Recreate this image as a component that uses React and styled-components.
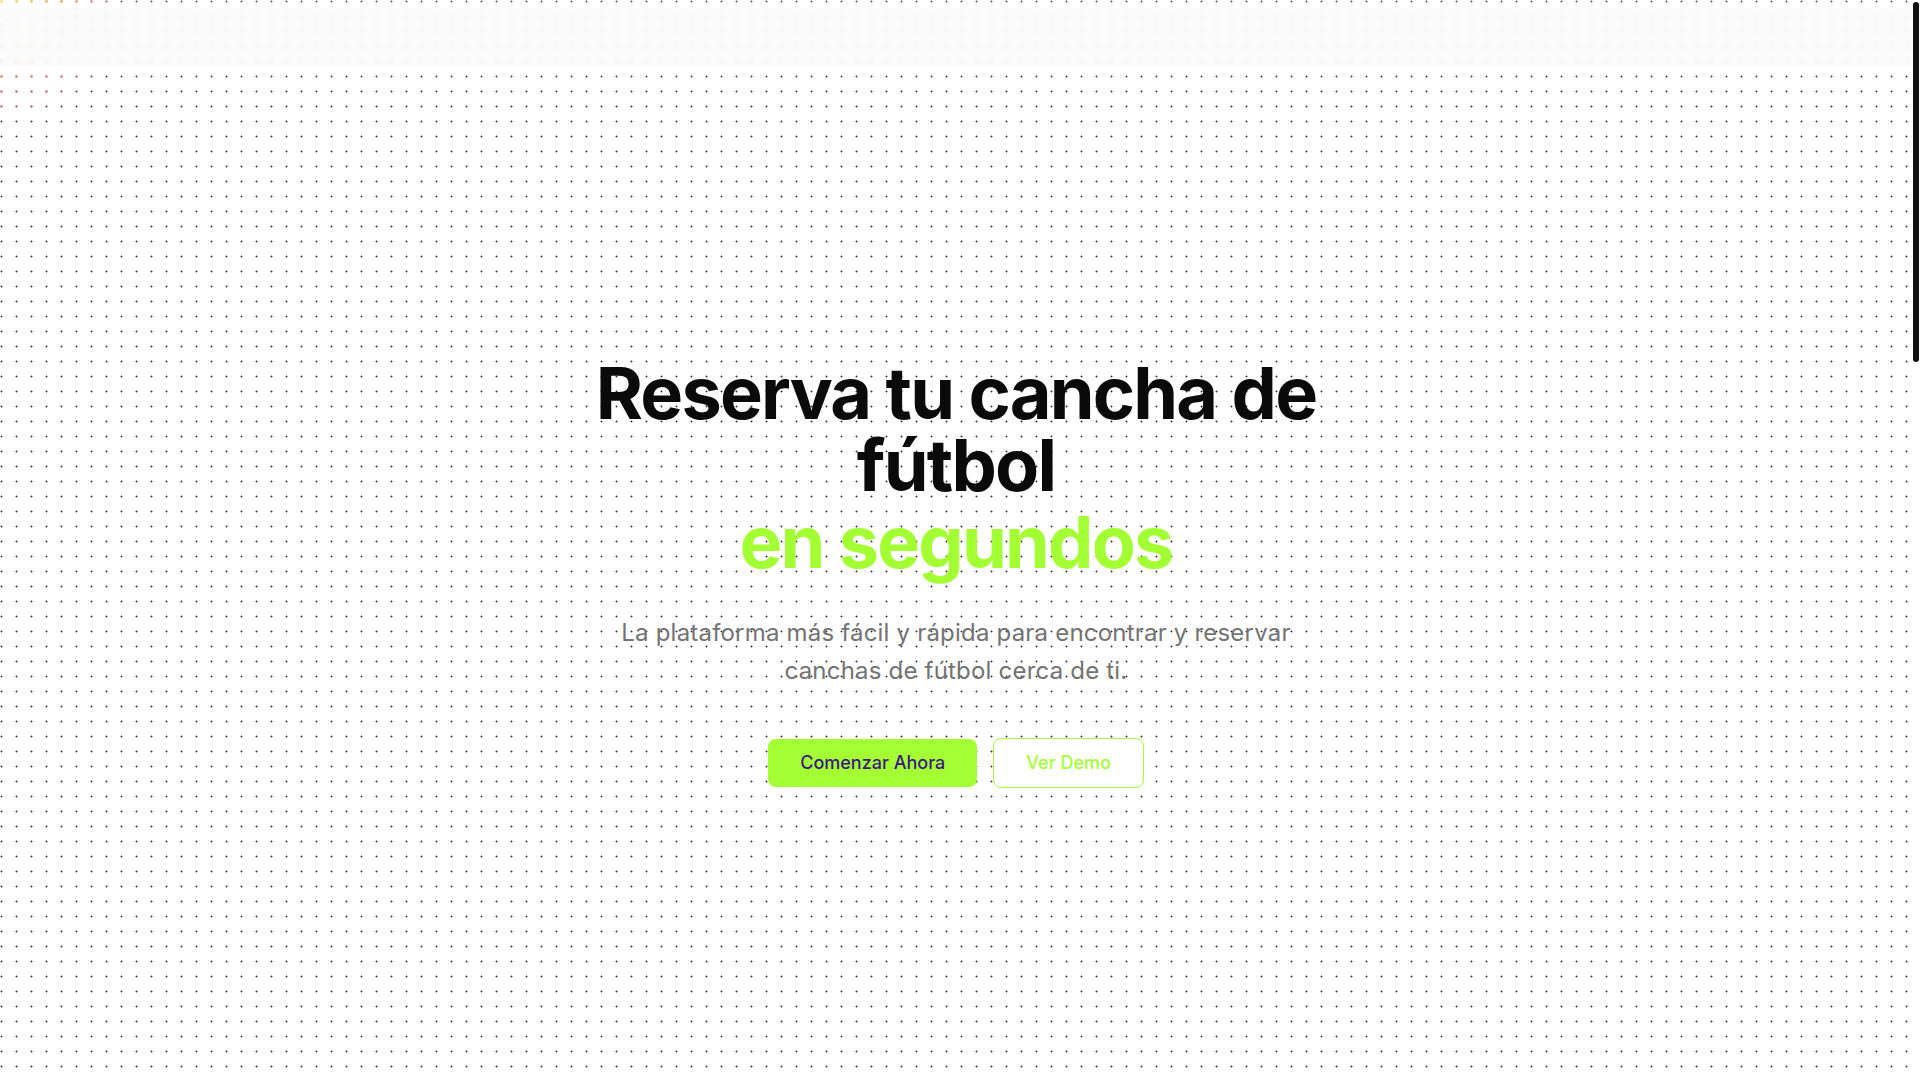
import React from "react";
import styled, { createGlobalStyle } from "styled-components";

const dots = (color, solid = 0.6, fade = 1.3) =>
  `radial-gradient(circle at center, ${color} 0, ${color} ${solid}px, transparent ${fade}px)`;

const GlobalStyle = createGlobalStyle`
  html, body {
    margin: 0;
    padding: 0;
  }
  body {
    font-family: "Inter", "Noto Sans", "Liberation Sans", sans-serif;
    background-color: #ffffff;
    background-image: ${dots("#2f2f2f")};
    background-size: 15px 15px;
    background-position: -6px -6px;
    color: #0a0a0a;
  }
  ::-webkit-scrollbar {
    width: 0;
  }
`;

const Glow = styled.div`
  position: fixed;
  top: 0;
  left: 0;
  width: 180px;
  height: 180px;
  pointer-events: none;
  background: radial-gradient(
    circle at 0 0,
    #ffe05a 0px,
    #e0a040 60px,
    #e07fa0 95px,
    rgba(224, 127, 160, 0) 128px
  );
  -webkit-mask-image: ${dots("#000", 0.9, 1.7)};
  mask-image: ${dots("#000", 0.9, 1.7)};
  -webkit-mask-size: 15px 15px;
  mask-size: 15px 15px;
  -webkit-mask-position: -6px -6px;
  mask-position: -6px -6px;
  -webkit-mask-repeat: repeat;
  mask-repeat: repeat;
  z-index: 5;
`;

const Header = styled.header`
  position: fixed;
  top: 8px;
  left: 0;
  right: 8px;
  height: 58px;
  background: rgba(250, 250, 250, 0.82);
  backdrop-filter: blur(2px);
  -webkit-backdrop-filter: blur(2px);
  box-shadow: 0 0 10px 3px rgba(255, 255, 255, 0.6);
  z-index: 10;
`;

const ScrollRail = styled.div`
  position: fixed;
  top: 0;
  right: 0;
  width: 8px;
  height: 100vh;
  background: #ffffff;
  z-index: 30;
  display: flex;
  justify-content: center;
  padding-top: 2px;
  box-sizing: border-box;
`;

const ScrollThumb = styled.div`
  width: 6px;
  height: 360px;
  border-radius: 3px;
  background: #111111;
`;

const Page = styled.div`
  min-height: 3240px;
  padding-right: 8px;
  display: flex;
  flex-direction: column;
`;

const Hero = styled.section`
  min-height: 100vh;
  box-sizing: border-box;
  padding-top: 64px;
  display: flex;
  flex-direction: column;
  align-items: center;
  justify-content: center;
  text-align: center;
  position: relative;
  z-index: 2;
`;

const Content = styled.div`
  max-width: 768px;
  padding: 0 16px;
  display: flex;
  flex-direction: column;
  align-items: center;
`;

const Title = styled.h1`
  margin: 0;
  font-size: 72px;
  line-height: 72px;
  font-weight: 700;
  letter-spacing: -0.025em;
  color: #0a0a0a;
`;

const Accent = styled.span`
  display: block;
  margin-top: 5px;
  color: #a3ff33;
`;

const Subtitle = styled.p`
  margin: 36px 0 0;
  max-width: 690px;
  font-size: 24px;
  line-height: 38px;
  letter-spacing: 0.2px;
  font-weight: 400;
  color: #737373;
`;

const Actions = styled.div`
  margin-top: 48px;
  display: flex;
  align-items: center;
  gap: 16px;
`;

const Button = styled.button`
  font-family: inherit;
  font-size: 18px;
  line-height: 28px;
  font-weight: 500;
  padding: 10px 32px;
  border-radius: 8px;
  cursor: pointer;
  border: ${(p) => (p.$outline ? "1px solid #a3ff33" : "none")};
  background: ${(p) => (p.$outline ? "#ffffff" : "#a3ff33")};
  color: ${(p) => (p.$outline ? "#a3ff33" : "#3b1782")};
`;

export default function App() {
  return (
    <>
      <GlobalStyle />
      <Glow />
      <Header />
      <ScrollRail>
        <ScrollThumb />
      </ScrollRail>
      <Page>
        <Hero>
          <Content>
            <Title>
              Reserva tu cancha de fútbol
              <Accent>en segundos</Accent>
            </Title>
            <Subtitle>
              La plataforma más fácil y rápida para encontrar y reservar canchas de fútbol cerca de ti.
            </Subtitle>
            <Actions>
              <Button>Comenzar Ahora</Button>
              <Button $outline>Ver Demo</Button>
            </Actions>
          </Content>
        </Hero>
      </Page>
    </>
  );
}
